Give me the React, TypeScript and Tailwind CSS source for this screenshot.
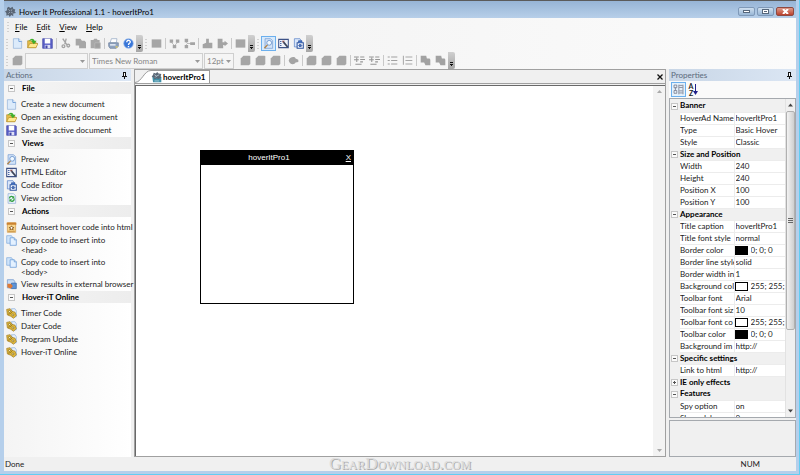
import type { ReactNode } from 'react'

type IconName =
  | 'new' | 'open' | 'save' | 'cut' | 'copy' | 'paste' | 'print' | 'help' | 'block' | 'tree' | 'branch'
  | 'up' | 'side' | 'preview' | 'html' | 'code' | 'view' | 'insert' | 'pages' | 'browser' | 'online'
  | 'page' | 'oval' | 'indent' | 'list' | 'numbers' | 'stack' | 'app' | 'doc'

const shapes: Record<IconName, ReactNode> = {
  new: (
    <>
      <path d="M2 1h8l4 4v10H2z" fill="#dcebfb" stroke="#8fb0d8" />
      <path d="M10 1v4h4" fill="#fff" stroke="#3f7ccc" />
    </>
  ),
  open: (
    <>
      <path d="M1 4h5l1 2h6v8H1z" fill="#e8bf4a" stroke="#b58c28" />
      <path d="M1 14l3-6h12l-3 6z" fill="#ffe98e" stroke="#b58c28" />
      <path d="M3 5c1-5 7-5 8-1h3l-4 5-4-5h2c-1-1-3-1-5 1z" fill="#3fae2a" />
    </>
  ),
  save: (
    <>
      <path d="M1 1h13l1 1v13H1z" fill="#5a5fc6" stroke="#4347a6" />
      <path d="M4 1h8v7H4z" fill="#fff" />
      <path d="M4 10h8v5H4z" fill="#dfe1f7" />
      <path d="M5 11h3v4H5z" fill="#4347a6" />
    </>
  ),
  cut: (
    <g fill="none" stroke="#a4a4a4" strokeWidth="2">
      <path d="M4 1l6 9M9 1L7 9" />
      <circle cx="5" cy="12" r="2" />
      <circle cx="12" cy="11" r="2" />
    </g>
  ),
  copy: <path d="M1 1h7l2 3h4l2 2v9H6v-4H1z" fill="#a6a6a6" />,
  paste: (
    <>
      <path d="M1 3h4l1-2h4l1 2h3v12H1z" fill="#a8a8a8" />
      <path d="M7 7h8v8H7z" fill="#a0a0a0" stroke="#bbb" />
    </>
  ),
  print: (
    <>
      <path d="M5 1h8l-1 6H3z" fill="#fff" stroke="#8fa3c0" />
      <path d="M1 7h14v5l-3 3H3l-2-3z" fill="#8fa3c0" stroke="#6b7e9b" />
      <path d="M3 9h8v2H3z" fill="#eef3fa" />
      <path d="M11 12h3v2h-3z" fill="#e0c95c" />
    </>
  ),
  help: (
    <>
      <circle cx="8" cy="8" r="7" fill="#3876d8" stroke="#9dbdec" />
      <path d="M5.5 6c0-4 5.5-3 5 0C10 8 8 7.5 8 10M8 11.5v2" fill="none" stroke="#fff" strokeWidth="2" />
    </>
  ),
  block: <path d="M1 2h14v12H1z" fill="#a6a6a6" />,
  tree: (
    <g fill="#a4a4a4">
      <path d="M1 2h5v5H1zM10 2h5v5h-5zM5.5 10h5v5h-5z" />
      <path d="M3 6l5 5 5-5" fill="none" stroke="#a4a4a4" />
    </g>
  ),
  branch: (
    <g fill="#a4a4a4">
      <path d="M1 1h5v5H1zM1 10h5v5H1zM9 6h7v4H9z" />
      <path d="M3 6l2 2-2 2M5 8h5" fill="none" stroke="#a4a4a4" />
    </g>
  ),
  up: <path d="M6 1h4v6h5v8H1V9l5-2z" fill="#a4a4a4" />,
  side: <path d="M1 1h7v5h3V4l5 4-5 4v-2H9v5H1z" fill="#a4a4a4" />,
  preview: (
    <>
      <path d="M3 1h8l3 3v11H3z" fill="#d3e4f8" stroke="#7098cf" />
      <circle cx="9" cy="7" r="3.5" fill="#f0f8ff" stroke="#4f7fc0" />
      <path d="M6.5 10L2 15" stroke="#b08248" strokeWidth="2" />
    </>
  ),
  html: (
    <>
      <path d="M1 2h14v12H1z" fill="#eef2fa" stroke="#3d5286" strokeWidth="1.5" />
      <path d="M3 5h2M3 8h2M3 11h2" stroke="#3f5da0" strokeWidth="1.5" />
      <path d="M8 6l6 7" stroke="#3b4358" strokeWidth="2.5" />
      <path d="M6 4h4l-3 3z" fill="#7e3e3e" />
    </>
  ),
  code: (
    <>
      <path d="M2 1h8l2 3v9H2z" fill="#dae7fa" stroke="#557fc6" />
      <path d="M6 7h9v8H6z" fill="#f2f7ff" stroke="#31569f" strokeWidth="1.5" />
      <path d="M8 7V4h5v3M8 11l2-2v4zM13 11l-2-2v4z" fill="#4272c2" stroke="#31569f" />
    </>
  ),
  view: (
    <>
      <path d="M3 1h8l3 3v11H3z" fill="#eef5fd" stroke="#8aa9d2" />
      <path d="M5 8c0-4 5-4 6-1M12 8c0 5-5 5-6 2" fill="none" stroke="#35a045" strokeWidth="2" />
      <path d="M12 4v4H8zM5 13V9h4z" fill="#35a045" />
    </>
  ),
  insert: (
    <>
      <path d="M2 1h12v14H2z" fill="#f8d68c" stroke="#cf9444" />
      <path d="M1 1h14v3H1z" fill="#cb8230" />
      <path d="M8 5l1.5 2 2.5.5-1.5 2 .5 2.5L8 11l-3 1 .5-2.500L4 7.500 6.500 7z" fill="#8a5a22" />
      <circle cx="8" cy="8.500" r="1.500" fill="#fff" />
      <path d="M3 13.500h10" stroke="#b87728" />
    </>
  ),
  pages: (
    <>
      <path d="M1 1h7l2 3v8H1z" fill="#cfe4fa" stroke="#7ba8dc" />
      <path d="M6 4h6l3 3v8H6z" fill="#e4f1ff" stroke="#5c92d4" />
      <path d="M12 4v3h3" fill="#fff" stroke="#4d86cb" />
    </>
  ),
  browser: (
    <>
      <path d="M2 1h9l2 3v9H2z" fill="#c7dcf5" stroke="#6992ca" />
      <path d="M8 6h7v8H8z" fill="#5d93d7" stroke="#3266ab" />
      <path d="M2 7h5l3 3-3 4-5-2z" fill="#df7b37" />
    </>
  ),
  online: (
    <>
      <path d="M8 1h5l2 3v9h-4z" fill="#e6effa" stroke="#8fb2dc" />
      <path d="M1 2l5-1 3 4 4 1 2 5-4 4-4-3-5-2z" fill="#e3bb3c" stroke="#9a7620" />
      <circle cx="5" cy="5" r="1.500" fill="#fff3b8" stroke="#7c6118" />
      <circle cx="10" cy="10" r="1.500" fill="#fff3b8" stroke="#7c6118" />
      <path d="M3 9l4-1 2-3" fill="none" stroke="#7c6118" />
    </>
  ),
  page: <path d="M5 1h9l1 1v11l-2 2H1V5z" fill="#a6a6a6" />,
  oval: <path d="M1 8c2-6 9-6 10-3l4 2v3l-4 1c-2 4-9 3-10-3z" fill="#a4a4a4" />,
  indent: (
    <path d="M0 3h7M9 3h6M9 6.5h7M9 10h4M2 13.5h9M0 7h7M4 4v6" stroke="#959595" strokeWidth="1.5" fill="none" />
  ),
  list: <path d="M1 3h3M6 3h9M1 8h3M6 8h9M1 13h3M6 13h9" stroke="#a0a0a0" strokeWidth="1.5" fill="none" />,
  numbers: <path d="M2 1v13M5 3h10M5 8h10M5 13h10" stroke="#a8a8a8" strokeWidth="1.5" fill="none" />,
  stack: <path d="M1 1h8l1 4h4l1 2v8H8l-2-4H1z" fill="#a2a2a2" />,
  app: (
    <>
      <path d="M5 1l3 2 3-2 1 3 3 1-1 3 2 2-4 1v4l-3-2-2 3-2-3-3 1V10L0 8l3-2V3z" fill="#5a6675" />
      <path d="M5 5l2 2M10 5L9 7M5 11l2-2M11 10L9 9" stroke="#c2cfdf" />
    </>
  ),
  doc: (
    <>
      <path d="M2 7h13v8H3z" fill="#3f8fa6" />
      <path d="M4 1l3 1 2-2 2 2 4 1-1 3 1 2-4 2-3-1-3 2-1-3-3-1 2-3z" fill="#5a6675" />
      <path d="M5 4l3 2 4-2M6 8l2-2M5 13h7" fill="none" stroke="#cfe3ea" />
    </>
  ),
}

function Icon({ name }: { name: IconName }) {
  return (
    <svg className="w-[11px] h-[11px] shrink-0" viewBox="0 0 16 16" aria-hidden="true">
      {shapes[name]}
    </svg>
  )
}

function Grip() {
  return (
    <svg className="w-[6px] h-3 shrink-0" viewBox="0 0 6 12" aria-hidden="true">
      <path d="M3 1v11" stroke="#b0b0b0" strokeDasharray="1 2" />
    </svg>
  )
}

function Overflow() {
  return (
    <button
      aria-label="Toolbar options"
      className="w-[7px] h-[17px] shrink-0 flex items-end justify-center pb-[2px] rounded-r-xs bg-linear-to-b from-[#d0d0d0] to-[#a6a6a6]"
    >
      <svg className="w-[5px] h-[5px]" viewBox="0 0 5 5">
        <path d="M1 0h3v1H1zM1 2h3v1H1zM2 3h1v1H2z" fill="#111" />
      </svg>
    </button>
  )
}

function Tools({ items, active }: { items: (IconName | '|')[]; active?: IconName }) {
  return (
    <>
      {items.map((item, i) =>
        item === '|' ? (
          <span key={i} className="w-[3px] h-[11px] shrink-0 flex justify-center">
            <span className="w-px bg-[#c9c9c9]" />
          </span>
        ) : (
          <button
            key={i}
            aria-label={item}
            className={
              item === active
                ? 'w-[15px] h-[15px] shrink-0 flex items-center justify-center border border-[#6cb0ee] bg-[#d8eafb]'
                : 'w-[15px] h-[15px] shrink-0 flex items-center justify-center'
            }
          >
            <Icon name={item} />
          </button>
        )
      )}
    </>
  )
}

function Combo({ label, value, width }: { label: string; value: string; width: string }) {
  return (
    <div className={`relative h-4 shrink-0 mr-px ${width}`}>
      <select
        aria-label={label}
        disabled
        className="block w-full h-full appearance-none border border-[#cfcfcf] bg-[#f5f5f5] pl-[2px] leading-3 text-[#858585]"
      >
        <option>{value}</option>
      </select>
      <svg className="absolute right-[3px] top-[7px] w-[5px] h-[3px]" viewBox="0 0 5 3">
        <path d="M0 0h5L2.5 3z" fill="#999" />
      </svg>
    </div>
  )
}

function PanelTitle({ title }: { title: string }) {
  return (
    <div className="h-3 shrink-0 flex items-center justify-between px-[2px] bg-linear-to-r from-[#c8d6e6] to-[#dbe6f4] text-[#5c6b7c]">
      <h2>{title}</h2>
      <button aria-label="Pin panel" className="mr-[2px]">
        <svg className="w-[5px] h-[7px]" viewBox="0 0 5 7">
          <path d="M1 0h3v4H1z" fill="#111" />
          <path d="M2 1h1v3H2z" fill="#fff" />
          <path d="M0 4h5v1H0zM2 5h1v2H2z" fill="#111" />
        </svg>
      </button>
    </div>
  )
}

function Toggle({ open = true }: { open?: boolean }) {
  return (
    <svg className="w-[7px] h-[7px] shrink-0" viewBox="0 0 7 7" aria-hidden="true">
      <rect x=".5" y=".5" width="6" height="6" fill="#fafafa" stroke="#c6c6c6" />
      <path d={open ? 'M2 3h3v1H2z' : 'M2 3h3v1H2zM3 2h1v3H3z'} fill="#555" />
    </svg>
  )
}

const groups: { title: string; items: [IconName, string][] }[] = [
  {
    title: 'File',
    items: [
      ['new', 'Create a new document'],
      ['open', 'Open an existing document'],
      ['save', 'Save the active document'],
    ],
  },
  {
    title: 'Views',
    items: [
      ['preview', 'Preview'],
      ['html', 'HTML Editor'],
      ['code', 'Code Editor'],
      ['view', 'View action'],
    ],
  },
  {
    title: 'Actions',
    items: [
      ['insert', 'Autoinsert hover code into html'],
      ['pages', 'Copy code to insert into\n<head>'],
      ['pages', 'Copy code to insert into\n<body>'],
      ['browser', 'View results in external browser'],
    ],
  },
  {
    title: 'Hover-iT Online',
    items: [
      ['online', 'Timer Code'],
      ['online', 'Dater Code'],
      ['online', 'Program Update'],
      ['online', 'Hover-iT Online'],
    ],
  },
]

function ActionsPanel() {
  return (
    <aside className="w-[127px] shrink-0 flex flex-col bg-linear-to-r from-[#f4f4f4] to-white">
      <PanelTitle title="Actions" />
      <div className="pt-px">
        {groups.map(group => (
          <section key={group.title}>
            <h3 className="h-3 flex items-center gap-[7px] pl-1 bg-linear-to-r from-[#f5f5f5] to-[#ededed] font-bold text-black">
              <Toggle />
              {group.title}
            </h3>
            <ul className="pt-1">
              {group.items.map(([icon, text], i) => (
                <li key={i}>
                  <button className="flex gap-1 pl-[2px] py-px text-left whitespace-pre text-[#222]">
                    <Icon name={icon} />
                    {text}
                  </button>
                </li>
              ))}
            </ul>
          </section>
        ))}
      </div>
    </aside>
  )
}

type Prop = { name: string; value: string; color?: 'black' | 'white' }

const properties: { title: string; open?: boolean; rows: Prop[] }[] = [
  {
    title: 'Banner',
    rows: [
      { name: 'HoverAd Name', value: 'hoverItPro1' },
      { name: 'Type', value: 'Basic Hover' },
      { name: 'Style', value: 'Classic' },
    ],
  },
  {
    title: 'Size and Position',
    rows: [
      { name: 'Width', value: '240' },
      { name: 'Height', value: '240' },
      { name: 'Position X', value: '100' },
      { name: 'Position Y', value: '100' },
    ],
  },
  {
    title: 'Appearance',
    rows: [
      { name: 'Title caption', value: 'hoverItPro1' },
      { name: 'Title font style', value: 'normal' },
      { name: 'Border color', value: '0; 0; 0', color: 'black' },
      { name: 'Border line style', value: 'solid' },
      { name: 'Border width in', value: '1' },
      { name: 'Background col', value: '255; 255; 255', color: 'white' },
      { name: 'Toolbar font', value: 'Arial' },
      { name: 'Toolbar font siz', value: '10' },
      { name: 'Toolbar font co', value: '255; 255; 255', color: 'white' },
      { name: 'Toolbar color', value: '0; 0; 0', color: 'black' },
      { name: 'Background im', value: 'http://' },
    ],
  },
  { title: 'Specific settings', rows: [{ name: 'Link to html', value: 'http://' }] },
  { title: 'IE only effects', open: false, rows: [] },
  {
    title: 'Features',
    rows: [
      { name: 'Spy option', value: 'on' },
      { name: 'Show delay', value: '0' },
    ],
  },
]

function PropertyGrid() {
  return (
    <div className="flex-1 min-h-0 flex overflow-hidden border border-[#a5a9ae] bg-[#f0f0f0]">
      <div className="flex-1 min-w-0 overflow-hidden pt-px">
        <table className="w-full table-fixed border-collapse leading-[11px]">
          <colgroup>
            <col className="w-[10px]" />
            <col className="w-[54px]" />
            <col />
          </colgroup>
          {properties.map(group => (
            <tbody key={group.title}>
              <tr className="h-3">
                <td className="p-0 pl-px">
                  <Toggle open={group.open} />
                </td>
                <th colSpan={2} className="p-0 text-left font-bold text-black">
                  {group.title}
                </th>
              </tr>
              {group.rows.map(row => (
                <tr key={row.name} className="h-3">
                  <td className="p-0" />
                  <th scope="row" className="p-0 border border-l-0 border-[#ececec] bg-white text-left font-normal overflow-hidden whitespace-nowrap">
                    {row.name}
                  </th>
                  <td className="p-0 border border-r-0 border-[#ececec] bg-white overflow-hidden">
                    <div className="flex items-center">
                      {row.color && (
                        <span
                          className={
                            row.color === 'black'
                              ? 'w-[13px] h-[9px] mr-[2px] shrink-0 border border-black bg-black'
                              : 'w-[13px] h-[9px] mr-[2px] shrink-0 border border-black bg-white'
                          }
                        />
                      )}
                      <input
                        aria-label={row.name}
                        defaultValue={row.value}
                        className="block w-full min-w-0 h-[11px] pl-px bg-transparent"
                      />
                    </div>
                  </td>
                </tr>
              ))}
            </tbody>
          ))}
        </table>
      </div>
      <div className="w-[10px] shrink-0 flex flex-col items-center border-l border-[#e2e2e2]">
        <svg className="w-[5px] h-3 py-1" viewBox="0 0 5 3">
          <path d="M0 3h5L2.5 0z" fill="#444" />
        </svg>
        <div className="h-[219px] w-full flex items-center justify-center rounded-xs border border-[#b0b0b0] bg-linear-to-r from-[#f3f3f3] to-[#cfcfcf]">
          <svg className="w-[5px] h-[5px]" viewBox="0 0 5 5">
            <path d="M0 .5h5M0 2.5h5M0 4.5h5" stroke="#666" />
          </svg>
        </div>
        <svg className="w-[5px] h-3 py-1 mt-auto" viewBox="0 0 5 3">
          <path d="M0 0h5L2.5 3z" fill="#444" />
        </svg>
      </div>
    </div>
  )
}

function PropertiesPanel() {
  return (
    <aside className="w-[127px] shrink-0 flex flex-col bg-[#f0f0f0] text-[#222]">
      <PanelTitle title="Properties" />
      <div className="h-[17px] shrink-0 flex items-center pl-[2px] bg-[#fafafa]">
        <button aria-label="Categorized" className="w-[15px] h-[15px] flex items-center justify-center border border-[#6cb0ee] bg-[#e4f1fc]">
          <svg className="w-[11px] h-[11px]" viewBox="0 0 16 16">
            <path d="M1.5 1.5h4v4h-4zM1.5 9.5h4v4h-4zM9 2h5M9 5h5M9 10h5M9 13h5M3.5 5v4M8.5 1v14M14.5 1v14" fill="none" stroke="#667" />
          </svg>
        </button>
        <button aria-label="Alphabetical" className="w-[15px] h-[15px] flex items-center justify-center text-[7px] leading-[7px] font-bold text-[#222]">
          <span className="flex flex-col">
            <span>A</span>
            <span>Z</span>
          </span>
          <svg className="w-[5px] h-[11px]" viewBox="0 0 5 11">
            <path d="M2 0h1v7h2L2.5 11 0 7h2z" fill="#20208a" />
          </svg>
        </button>
      </div>
      <PropertyGrid />
      <div className="h-[37px] shrink-0 mt-[2px] border border-[#a5a9ae]" />
    </aside>
  )
}

function Workspace() {
  return (
    <main className="flex-1 min-w-0 flex flex-col border border-[#a0a0a0] bg-[#f0f0f0]">
      <div className="h-[14px] shrink-0 flex items-end justify-between border-b border-[#a0a0a0]">
        <button className="flex items-end h-full font-bold text-black">
          <svg className="w-4 h-[13px]" viewBox="0 0 16 13" aria-hidden="true">
            <path d="M0 13C7 12 9 0 16 .5V13z" fill="#fff" />
            <path d="M0 12.5C7 12 9 .5 16 .5" fill="none" stroke="#9a9a9a" />
          </svg>
          <span className="h-[13px] flex items-center gap-px pr-[3px] border-t border-r border-[#9a9a9a] bg-white">
            <Icon name="doc" />
            hoverItPro1
          </span>
        </button>
        <button aria-label="Close document" className="w-[11px] h-[13px] flex items-center justify-center">
          <svg className="w-[6px] h-[6px]" viewBox="0 0 6 6">
            <path d="M.5.5l5 5M5.5.5l-5 5" stroke="#111" strokeWidth="1.3" />
          </svg>
        </button>
      </div>
      <div className="relative flex-1 mt-px border-t border-l border-[#696969] bg-white flex justify-end">
        <div className="absolute left-16 top-16 w-[154px] h-[154px] border border-black bg-white">
          <div className="relative h-[14px] flex items-center justify-center bg-black pr-4 font-['Liberation_Sans',sans-serif] text-white">
            hoverItPro1
            <button aria-label="Close hover" className="absolute right-[2px] underline">X</button>
          </div>
        </div>
        <div className="w-3 bg-[#f3f3f3] flex flex-col items-center justify-between py-1">
          <svg className="w-[5px] h-[3px]" viewBox="0 0 5 3">
            <path d="M0 3h5L2.5 0z" fill="#aaa" />
          </svg>
          <svg className="w-[5px] h-[3px]" viewBox="0 0 5 3">
            <path d="M0 0h5L2.5 3z" fill="#aaa" />
          </svg>
        </div>
      </div>
    </main>
  )
}

function TitleBar() {
  return (
    <header className="h-[18px] shrink-0 flex items-center gap-[3px] border-t border-[#5b5b5b] pl-px pt-[4px]">
      <Icon name="app" />
      <h1 className="text-black">Hover It Professional 1.1 - hoverItPro1</h1>
      <div className="ml-auto mr-[2px] flex gap-[2px]">
        <button aria-label="Minimize" className="w-[17px] h-[9px] flex items-center justify-center rounded-xs border border-[#7f99b8] bg-linear-to-b from-[#cfdfef] to-[#98b6d5]">
          <svg className="w-[7px] h-[3px]" viewBox="0 0 7 3"><rect x=".5" y=".5" width="6" height="2" fill="#fff" stroke="#56677c" /></svg>
        </button>
        <button aria-label="Maximize" className="w-[17px] h-[9px] flex items-center justify-center rounded-xs border border-[#7f99b8] bg-linear-to-b from-[#cfdfef] to-[#98b6d5]">
          <svg className="w-[7px] h-[5px]" viewBox="0 0 7 5"><rect x=".5" y=".5" width="6" height="4" fill="#fff" stroke="#56677c" /><path d="M2 2h3v1H2z" fill="#56677c" /></svg>
        </button>
        <button aria-label="Close" className="w-[18px] h-[9px] flex items-center justify-center rounded-xs border border-[#8e4a42] bg-linear-to-b from-[#dc9a8b] to-[#bb3f2b]">
          <svg className="w-[7px] h-[5px]" viewBox="0 0 7 5"><path d="M1 0l5 5M6 0L1 5" stroke="#fff" strokeWidth="2" /></svg>
        </button>
      </div>
    </header>
  )
}

export default function App() {
  return (
    <div className="h-screen border-r border-b border-[#62cdf2] font-['Lato',sans-serif] text-[8px] leading-[10px]">
      <div className="h-full flex flex-col overflow-hidden border-l-4 border-r-[3px] border-b-[3px] border-[#b5cfeb] bg-linear-to-b from-[#95b3d5] to-[#b7cfe9] bg-[length:100%_18px] bg-no-repeat">
        <TitleBar />
        <div className="flex-1 min-h-0 flex flex-col bg-[#f0f0f0]">
          <div className="shrink-0 bg-linear-to-r from-[#f1f1f1] to-[#fbfbfb]">
            <nav className="h-[17px] flex items-center pl-px">
              <Grip />
              <div className="flex gap-[9px] pl-1 text-black">
                <button><u>F</u>ile</button>
                <button><u>E</u>dit</button>
                <button><u>V</u>iew</button>
                <button><u>H</u>elp</button>
              </div>
            </nav>
            <div className="h-[17px] flex items-center">
              <Grip />
              <Tools items={['new', 'open', 'save', '|', 'cut', 'copy', 'paste', '|', 'print', 'help']} />
              <Overflow />
              <Grip />
              <Tools items={['block', '|', 'tree', 'branch', '|', 'up', 'side', '|', 'block']} />
              <Overflow />
              <Grip />
              <Tools items={['preview', 'html', 'code']} active="preview" />
              <Overflow />
            </div>
            <div className="h-[17px] flex items-center">
              <Grip />
              <Tools items={['page']} />
              <Combo label="Style" value="" width="w-[63px]" />
              <Combo label="Font" value="Times New Roman" width="w-[114px]" />
              <Combo label="Font size" value="12pt" width="w-[30px]" />
              <span className="w-[3px]" />
              <Tools
                items={['page', 'page', 'page', '|', 'oval', '|', 'page', 'page', 'page', '|', 'indent', 'indent', '|', 'list', 'numbers', '|', 'stack', 'stack']}
              />
              <Overflow />
            </div>
          </div>
          <div className="flex-1 min-h-0 flex gap-[3px]">
            <ActionsPanel />
            <Workspace />
            <PropertiesPanel />
          </div>
          <footer className="relative h-[14px] shrink-0 flex items-center justify-between text-[#222]">
            <span className="pl-px">Done</span>
            <span className="absolute inset-x-0 text-center font-['Liberation_Serif',serif] text-[17px] text-[#dcdcdc] text-shadow-[1px_1px_0_#adadad] [font-variant:small-caps]">
              GearDownload.com
            </span>
            <span className="pr-9">NUM</span>
          </footer>
        </div>
      </div>
    </div>
  )
}
